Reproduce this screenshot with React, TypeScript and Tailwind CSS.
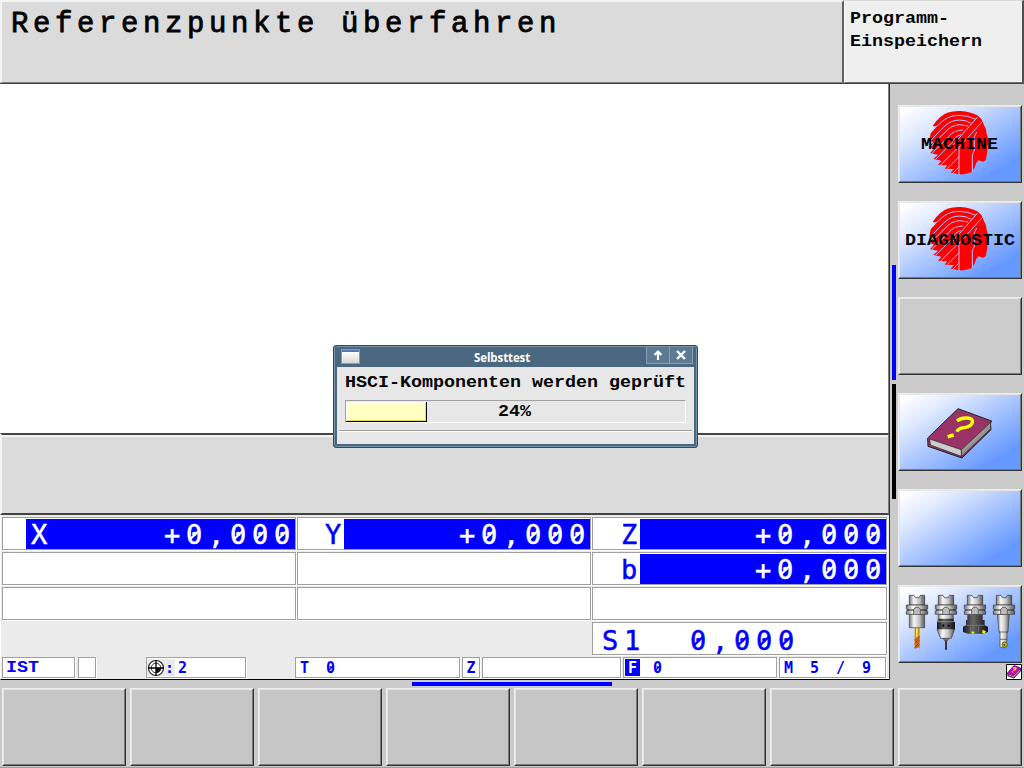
import React from "react";

type KeyProps = { children?: React.ReactNode; tone?: "blue" | "gray" | "dark" };

const TONES = {
  blue: "bg-[linear-gradient(148deg,#ffffff_4%,#dfe9ff_25%,#6699ff_84%)]",
  gray: "bg-[#cccccc]",
  dark: "bg-[#c6c6c6]",
};

function SoftKey({ children, tone = "gray" }: KeyProps) {
  return (
    <div className="h-[78px] w-[124px] shrink-0 border-t border-l border-r border-b border-t-[#eeeeee] border-l-[#eeeeee] border-r-[#333333] border-b-[#333333]">
      <div className={`relative flex h-full w-full items-center justify-center border border-t-[#e6e6e6] border-l-[#e6e6e6] border-r-[#777777] border-b-[#777777] ${TONES[tone]}`}>
        {children}
      </div>
    </div>
  );
}

/* Wide 11px-pitch terminal lettering */
function Wide({ children, className = "", center = false }: { children: React.ReactNode; className?: string; center?: boolean }) {
  return (
    <span className={`inline-block ${center ? "origin-center" : "origin-left"} scale-x-[1.146] whitespace-pre font-['Liberation_Mono',monospace] text-[16px] leading-[23px] font-bold ${className}`}>
      {children}
    </span>
  );
}

/* A zero crossed by a diagonal bar */
function Zero({ small = false }: { small?: boolean }) {
  return (
    <span className="relative">
      0
      <svg
        viewBox="0 0 14 20"
        preserveAspectRatio="none"
        className={small ? "absolute top-[5px] left-[1px] h-[9px] w-[7px]" : "absolute top-[7px] left-[2px] h-[18px] w-[13px]"}
      >
        <path d="M2 15 L12 5" stroke="currentColor" strokeWidth="2.4" fill="none" />
      </svg>
    </span>
  );
}

function slashed(text: string, small = false) {
  return text.split(/(0)/).filter(Boolean).map((part, i) => (part === "0" ? <Zero key={i} small={small} /> : part));
}

/* Large 22px-pitch readout digits */
function Digits({ children, className = "tracking-[5.75px]" }: { children: string; className?: string }) {
  return (
    <span className={`relative top-px whitespace-pre font-['DejaVu_Sans_Mono',monospace] text-[27px] leading-[30px] [-webkit-text-stroke:0.5px_currentColor] ${className}`}>
      {slashed(children)}
    </span>
  );
}

const CELL = "flex border border-[#a0a0a0] bg-white shadow-[1px_1px_0_#ffffff]";

function Axis({ name, inside = false, pad = "", fill = "" }: { name?: string; inside?: boolean; pad?: string; fill?: string }) {
  if (!name) return <div className={`${CELL} h-[33px]`} />;
  return (
    <div className={`${CELL} h-[33px] pt-px text-[#0000ff] ${pad}`}>
      {!inside && <Digits className="w-[19px] tracking-normal">{name}</Digits>}
      <div className={`flex h-[30px] justify-between bg-[#0000ff] text-white ${fill}`}>
        <Digits className="pl-[5px] tracking-normal">{inside ? name : ""}</Digits>
        <Digits className="-mr-px tracking-[5.75px]">+0,000</Digits>
      </div>
    </div>
  );
}

function Head() {
  return (
    <svg viewBox="0 0 216 216" className="absolute left-[24px] top-[1px] h-[72px] w-[72px]">
      <path
        fill="#ff0000"
        d="M26 54 L34 43 Q48 24 70 14 Q88 8 110 9 Q140 11 160 22 L172 33 L179 49 Q187 62 188 77 L195 102 L190 115 V132 L185 157 L177 161 L164 157 L157 164 L151 180 L142 193 Q122 201 106 199 L80 194 L90 183 L62 182 L70 172 L42 171 L52 158 L28 153 L42 140 L18 136 L30 122 L14 116 L28 102 L16 98 L20 76 L38 56Z"
      />
      <g fill="none" stroke="#b5c0ff" strokeWidth="3">
        <path d="M30 60 L42 52 Q68 22 104 22 Q132 22 156 34" />
        <path d="M18 100 L58 58 Q80 36 106 36 Q126 36 142 46" />
        <path d="M14 122 L64 72 Q82 51 108 50 L132 54" />
        <path d="M22 138 L74 86 Q88 66 118 66" />
        <path d="M34 155 L84 104 Q94 84 110 80" />
        <path d="M48 173 L102 119" />
        <path d="M65 187 L106 145" />
        <path d="M84 198 L106 176" />
        <path d="M86 112 L161 27" />
        <path d="M105 118 L173 43" />
        <path d="M105 115 V200" />
        <path d="M145 192 V142 L151 126 V86 L158 72" />
      </g>
    </svg>
  );
}

function Book() {
  return (
    <svg viewBox="126 376 204 162" className="absolute left-[26px] top-[11px] h-[54px] w-[68px]">
      <path fill="#993366" stroke="#222" strokeWidth="3" d="M131 472 L222 384 L323 421 L319 428 L321 447 L234 532 L132 497Z" />
      <path fill="#cccccc" stroke="#222" strokeWidth="2" d="M137 475 L232 507 V527 L139 493Z" />
      <path fill="#999999" stroke="#222" strokeWidth="2" d="M232 507 L320 425 V444 L233 527Z" />
      <path stroke="#777" strokeWidth="1.5" fill="none" d="M235 519 L319 437" />
      <path stroke="#ffff00" strokeWidth="10" fill="none" d="M219 421 Q229 412 246 412 Q268 412 265 425 Q262 438 240 441 Q222 443 219 453" />
      <path stroke="#ffff00" strokeWidth="11" d="M191 468 L209 463" />
    </svg>
  );
}

function Holder({ x }: { x: number }) {
  return (
    <g transform={`translate(${x} 0)`}>
      <path fill="url(#steel)" stroke="#333" strokeWidth="2" d="M-23 22 H-9 L-5 29 H7 L10 22 H23 V51 H-23Z" />
      <path fill="url(#steel)" stroke="#333" strokeWidth="2" d="M-32 51 H32 V62 L28 66 L32 70 V79 H-32 V70 L-28 66 L-32 62Z" />
      <path stroke="#222" strokeWidth="3" d="M-31 66 H-8 M10 66 H31" />
      <path stroke="#333" strokeWidth="2" fill="#bbb" d="M-10 78 V64 Q0 50 10 64 V78" />
    </g>
  );
}

function Tools() {
  return (
    <svg viewBox="0 0 366 222" className="absolute left-0 top-px h-[74px] w-[122px]">
      <defs>
        <linearGradient id="steel">
          <stop offset="0" stopColor="#777" />
          <stop offset=".3" stopColor="#f8f8f8" />
          <stop offset=".65" stopColor="#c4c4c4" />
          <stop offset="1" stopColor="#555" />
        </linearGradient>
        <linearGradient id="iron">
          <stop offset="0" stopColor="#181818" />
          <stop offset=".4" stopColor="#666" />
          <stop offset="1" stopColor="#111" />
        </linearGradient>
      </defs>
      <rect x="44" y="118" width="15" height="62" fill="#c89500" />
      <rect x="48" y="118" width="5" height="30" fill="#ffe050" />
      <path d="M44 158 L59 145 M44 170 L59 157 M44 181 L59 169" stroke="#d45a18" strokeWidth="6" />
      <path d="M45 164 L58 152 M45 177 L58 164" stroke="#333" strokeWidth="2" />
      <path fill="url(#steel)" stroke="#444" strokeWidth="2" d="M28 78 H74 V119 H28Z" />
      <Holder x={51} />
      <path fill="url(#steel)" stroke="#333" strokeWidth="2" d="M115 79 H159 L163 126 L154 151 H122 L112 126Z" />
      <path fill="url(#iron)" d="M116 92 H160 V102 H165 V124 H111 V102 H116Z" />
      <path stroke="#aaa" strokeWidth="2" d="M115 101 H161" />
      <circle cx="130" cy="113" r="4" fill="#050505" stroke="#777" />
      <circle cx="146" cy="113" r="4" fill="#050505" stroke="#777" />
      <path fill="#777" stroke="#222" d="M129 151 H148 L142 159 H134Z" />
      <path stroke="#221008" strokeWidth="5" d="M138 158 V185" />
      <path stroke="#bd5030" strokeWidth="2" strokeDasharray="3 4" d="M138 161 V180" />
      <Holder x={138} />
      <path fill="url(#iron)" d="M202 79 H248 V96 H254 V112 L264 116 V132 L246 137 H204 L189 132 V116 L198 112 V96 H202Z" />
      <path stroke="#888" strokeWidth="2" d="M199 112 H253 M212 116 V133 M236 116 V133" />
      <path fill="#eeee00" d="M215 130 L224 132 L220 138 L214 136Z M248 125 L258 130 L253 137 L246 134Z" />
      <Holder x={225} />
      <path fill="url(#steel)" stroke="#444" strokeWidth="2" d="M292 79 H328 L324 132 H321 V158 L312 180 L300 177 V132 H297Z" />
      <path stroke="#333" strokeWidth="2" d="M297 132 H324 M300 154 H321" />
      <circle cx="314" cy="170" r="8" fill="#d9cf00" stroke="#222" strokeWidth="2" />
      <circle cx="313" cy="170" r="3" fill="#333" />
      <Holder x={312} />
    </svg>
  );
}

function Datum() {
  return (
    <svg viewBox="0 0 18 18" className="h-[18px] w-[18px] shrink-0">
      <circle cx="9" cy="9" r="7.5" fill="white" stroke="#222" strokeWidth="1.2" />
      <circle cx="9" cy="9" r="4.8" fill="white" stroke="#333" />
      <path d="M9 9 H14 A5 5 0 0 1 9 14Z" fill="black" />
      <path d="M1 9 H17 M9 1 V17" stroke="black" strokeWidth="1.3" />
    </svg>
  );
}

const STATUS = `${CELL} h-[21px] shrink-0 items-center text-[#0000ff]`;
const SMALL = "whitespace-pre font-['DejaVu_Sans_Mono',monospace] text-[15px] leading-[19px] font-bold pt-px";

export default function App() {
  return (
    <div className="flex h-[768px] w-[1024px] flex-col overflow-hidden bg-[#cbcbcb] text-black">
      <header className="flex h-[84px] shrink-0 border-b border-[#404040]">
        <div className="w-[844px] border-t-2 border-r-2 border-b border-l-2 border-t-[#f5f5f5] border-r-[#606060] border-b-[#808080] border-l-[#f5f5f5] bg-[#dbdbdb] pt-[7px] pl-[9px]">
          <h1 className="font-['Liberation_Mono',monospace] text-[29px] leading-[32px] tracking-[4.6px] whitespace-pre [-webkit-text-stroke:0.8px_black]">Referenzpunkte überfahren</h1>
        </div>
        <div className="flex w-[180px] flex-col border-t border-r-2 border-b border-l border-t-[#d8d8d8] border-r-[#505050] border-b-[#707070] border-l-white bg-[#efefef] pt-[7px] pl-[5px]">
          <Wide>Programm-</Wide>
          <Wide>Einspeichern</Wide>
        </div>
      </header>

      <div className="flex h-[596px] shrink-0">
        <main className="flex w-[890px] flex-col border-r border-[#303030]">
          <div className="h-[349px] shrink-0 border-r border-[#808080] bg-white" />
          <div className="h-[82px] shrink-0 border-t-2 border-r border-b-2 border-l-2 border-t-[#444444] border-r-[#808080] border-b-[#444444] border-l-[#f5f5f5] bg-[#dbdbdb] shadow-[inset_0_2px_0_#f5f5f5]" />
          <div className="flex h-[165px] flex-col border-b border-l border-b-black border-l-white bg-[#ebebeb] pt-[2px] pl-px">
            <div className="grid grid-cols-[294px_294px_295px] gap-x-px gap-y-[2px]">
              <Axis name="X" inside pad="pl-[23px]" fill="w-[269px]" />
              <Axis name="Y" pad="pl-[27px]" fill="w-[246px]" />
              <Axis name="Z" pad="pl-[28px]" fill="w-[246px]" />
              <Axis />
              <Axis />
              <Axis name="b" pad="pl-[28px]" fill="w-[246px]" />
              <Axis />
              <Axis />
              <Axis />
            </div>
            <div className="mt-[2px] flex justify-end pr-[2px]">
              <div className={`${CELL} h-[33px] w-[295px] items-center pt-[2px] pl-[9px] text-[#0000ff]`}>
                <Digits>S1  0,000</Digits>
              </div>
            </div>
            <div className="mt-[2px] flex">
              <div className={`${STATUS} w-[73px] pl-[3px]`}><Wide className="pt-[2px] leading-[19px]">IST</Wide></div>
              <div className={`${STATUS} ml-[3px] w-[18px]`} />
              <div className={`${STATUS} ml-[50px] w-[100px]`}>
                <div className="flex h-[17px] w-[28px] items-center bg-[#ebebeb]">
                  <Datum />
                  <span className={SMALL}>:</span>
                </div>
                <span className={`${SMALL} ml-[3px]`}>2</span>
              </div>
              <div className={`${STATUS} ml-[49px] w-[165px] pl-[4px]`}><span className={`${SMALL} tracking-[3.97px]`}>{slashed("T 0", true)}</span></div>
              <div className={`${STATUS} ml-[2px] w-[18px] justify-center`}><span className={SMALL}>Z</span></div>
              <div className={`${STATUS} ml-[2px] w-[139px]`} />
              <div className={`${STATUS} ml-[2px] w-[154px] pl-px`}>
                <span className={`${SMALL} flex h-[17px] w-[15px] items-center justify-center bg-[#0000ff] text-white`}>F</span>
                <span className={`${SMALL} ml-[13px]`}>{slashed("0", true)}</span>
              </div>
              <div className={`${STATUS} ml-[2px] w-[107px] pl-[4px]`}><span className={`${SMALL} tracking-[3.97px]`}>M 5 / 9</span></div>
            </div>
          </div>
        </main>

        <aside className="flex w-[134px]">
          <div className="ml-[2px] flex w-[4px] flex-col gap-[4px] pt-[181px]">
            <div className="h-[115px] bg-[#0000ff]" />
            <div className="h-[115px] bg-black" />
          </div>
          <div className="ml-[2px] flex flex-col gap-[18px] pt-[21px]">
            <SoftKey tone="blue"><Head /><Wide center className="relative pt-[2px] leading-[20px]">MACHINE</Wide></SoftKey>
            <SoftKey tone="blue"><Head /><Wide center className="relative pt-[2px] leading-[20px]">DIAGNOSTIC</Wide></SoftKey>
            <SoftKey />
            <SoftKey tone="blue"><Book /></SoftKey>
            <SoftKey tone="blue" />
            <SoftKey tone="blue"><Tools /></SoftKey>
            <svg viewBox="0 0 16 16" className="-mt-[17px] ml-[108px] h-[16px] w-[16px] shrink-0">
              <path d="M.5 .5 H15.5 V15.5 H.5Z" fill="white" stroke="black" />
              <path d="M1.5 9 L8 1.5 L14.5 4 V7 L8 14 L2 12Z" fill="#cc00cc" stroke="#440044" strokeWidth=".8" />
              <path d="M2.5 10.5 L7.5 12 L14 5.5 V7 L8 13.3 L2.5 12Z" fill="#ddd" stroke="#333" strokeWidth=".6" />
              <path d="M7 4.2 Q11 3 9.5 5.5 L7.5 6.5 M6 8.2 L7 7.7" fill="none" stroke="#ffff00" strokeWidth="1.3" />
            </svg>
          </div>
        </aside>
      </div>

      <div className="ml-[412px] mt-[2px] h-[4px] w-[200px] shrink-0 bg-[#0000ff]" />
      <footer className="mt-[2px] flex shrink-0 gap-[4px] pl-[2px]">
        {Array.from({ length: 8 }, (_, i) => <SoftKey key={i} tone="dark" />)}
      </footer>
      <div className="mt-px h-px shrink-0 bg-[#a0a090]" />

      <section className="absolute left-[333px] top-[345px] flex h-[103px] w-[365px] flex-col rounded-[3px] border border-[#2c4a60] bg-[#4a6880] shadow-[inset_0_0_0_1px_#7692a6]">
        <div className="flex h-[21px] shrink-0 items-start pl-[8px]">
          <div className="mt-[4px] h-[13px] w-[17px] border-t-2 border-t-[#5577bb] bg-gradient-to-b from-white to-[#d8d8d4] shadow-[0_0_0_1px_#8c9aa4]" />
          <div className="ml-[115px] flex-1 pt-[2px] font-['Open_Sans',sans-serif] text-[11.5px] leading-[19px] font-bold tracking-[-0.1px] text-white">Selbsttest</div>
          <div className="mr-[4px] mt-px flex h-[17px] border border-t-0 border-[#8aa0b2] bg-[#5d7a92]">
            <svg viewBox="0 0 22 16" className="h-[16px] w-[23px] border-r border-[#8aa0b2]"><path d="M11 13 V5 M7.5 8 L11 4.5 L14.5 8" fill="none" stroke="white" strokeWidth="2.2" /></svg>
            <svg viewBox="0 0 22 16" className="h-[16px] w-[22px]"><path d="M7 4 L15 12 M15 4 L7 12" stroke="white" strokeWidth="2.4" /></svg>
          </div>
        </div>
        <div className="mx-[3px] flex h-[77px] flex-col bg-[#e7e7e7] pt-[4px]">
          <Wide className="ml-[8px] pt-px leading-[20px]">HSCI-Komponenten werden geprüft</Wide>
          <div className="relative mt-[5px] ml-[8px] h-[23px] w-[341px] border border-t-[#a0a0a0] border-l-[#a0a0a0] border-r-white border-b-white">
            <div className="mt-px h-[20px] w-[81px] border-r border-b border-black bg-[#ffffc0] shadow-[inset_1px_1px_0_#ffffff,inset_-1px_-1px_0_#e6dc50]" />
            <div className="absolute inset-0 flex items-center justify-center pr-[2px] pt-px"><Wide center className="leading-[20px]">24%</Wide></div>
          </div>
          <div className="mx-[2px] mt-[7px] h-[2px] border-t border-b border-t-[#a0a0a0] border-b-white" />
        </div>
      </section>
    </div>
  );
}
